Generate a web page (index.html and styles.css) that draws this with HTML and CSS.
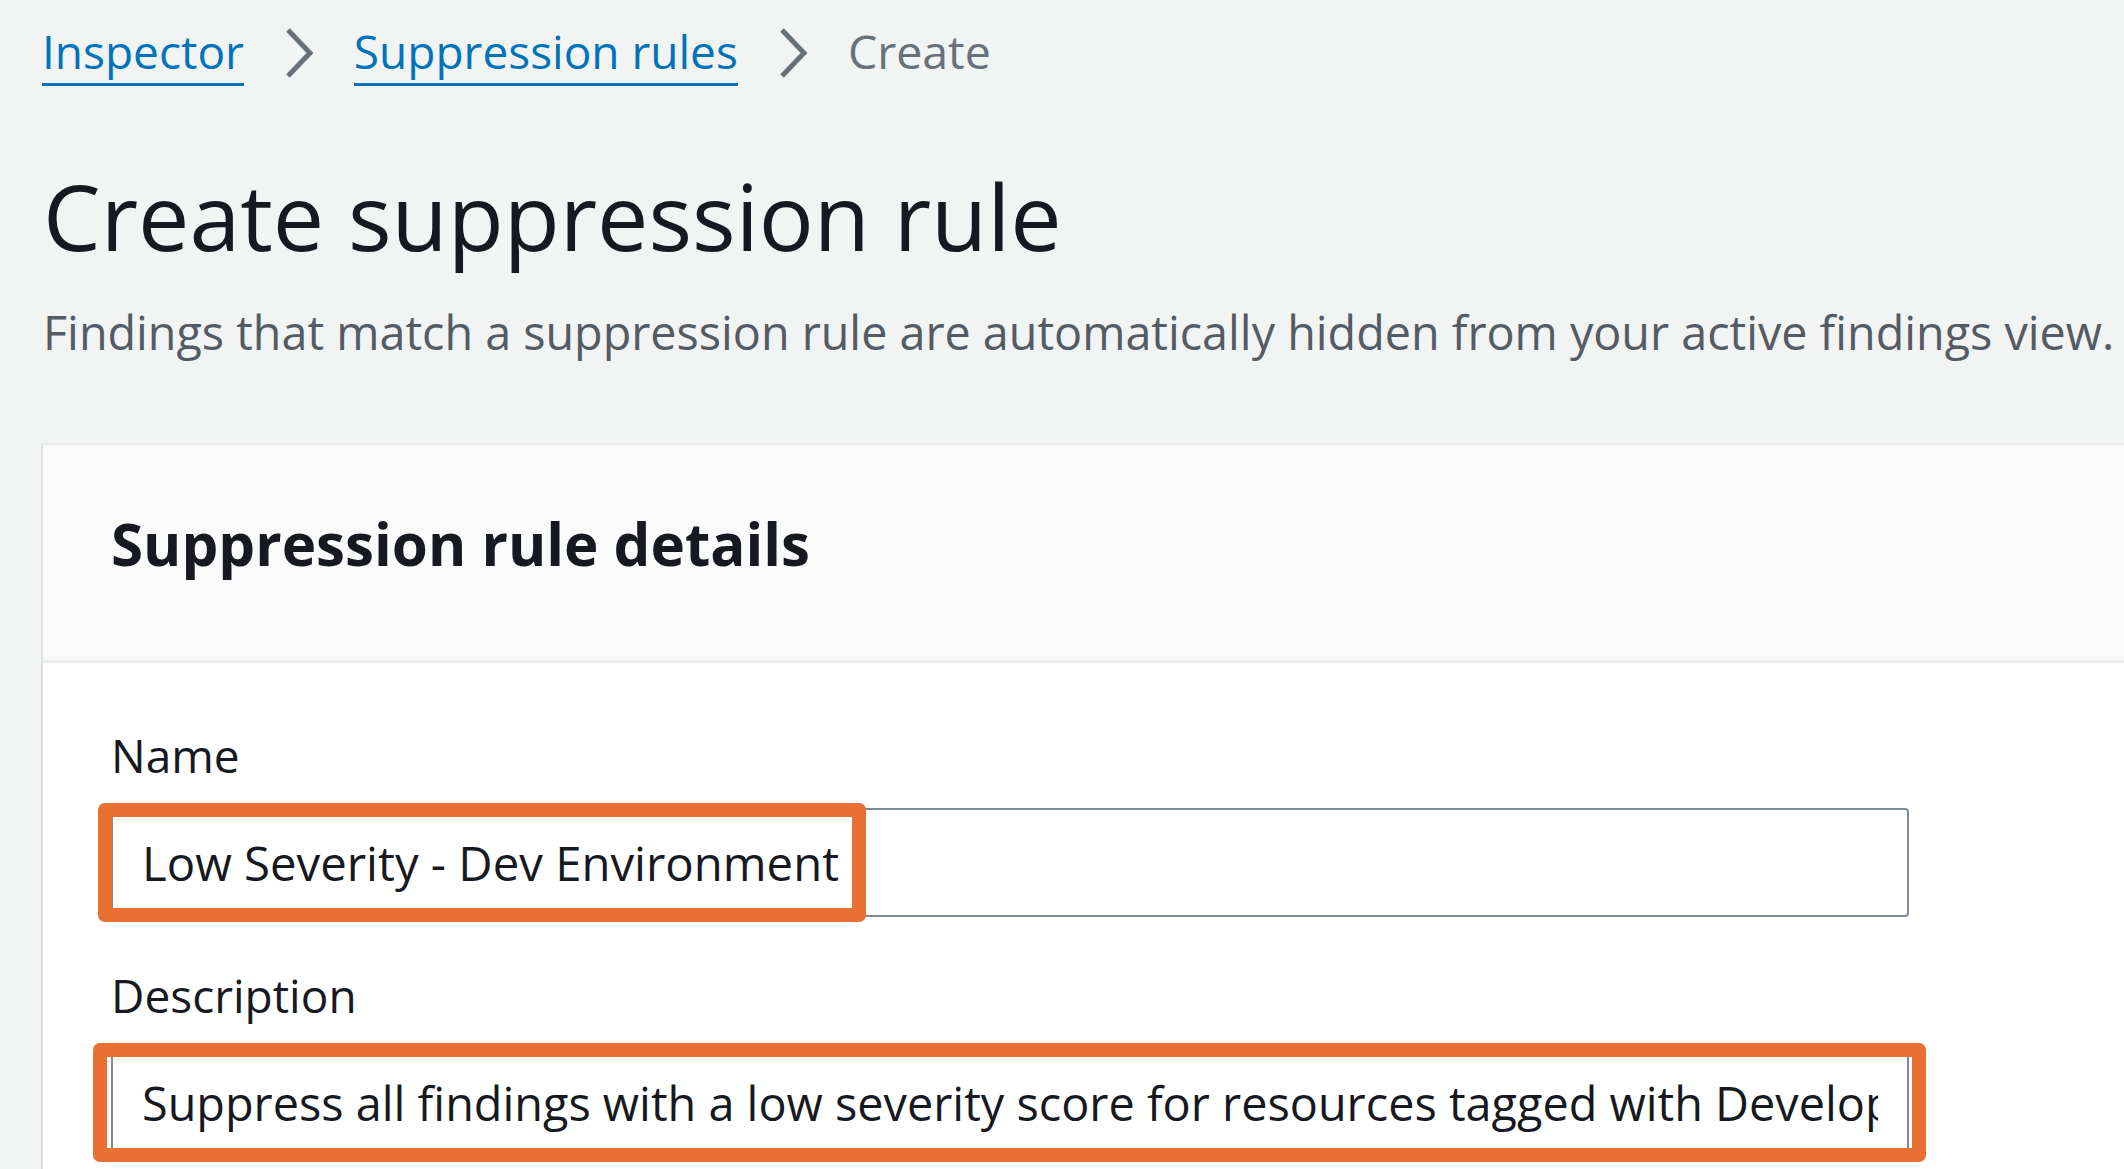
FILE: index.html
```html
<!DOCTYPE html>
<html lang="en">
<head>
<meta charset="utf-8">
<title>Create suppression rule</title>
<link rel="stylesheet" href="styles.css">
</head>
<body>
  <nav class="breadcrumbs" aria-label="Breadcrumbs">
    <a class="crumb-link" href="#">Inspector</a>
    <svg class="crumb-sep" viewBox="0 0 30 52" aria-hidden="true"><polyline points="4,3 26,26 4,49" /></svg>
    <a class="crumb-link" href="#">Suppression rules</a>
    <svg class="crumb-sep" viewBox="0 0 30 52" aria-hidden="true"><polyline points="4,3 26,26 4,49" /></svg>
    <span class="crumb-current">Create</span>
  </nav>

  <header class="page-header">
    <h1 class="page-title">Create suppression rule</h1>
    <p class="page-desc">Findings that match a suppression rule are automatically hidden from your active findings view.</p>
  </header>

  <section class="card">
    <div class="card-header">
      <h2 class="card-title">Suppression rule details</h2>
    </div>
    <div class="card-body">
      <div class="field">
        <label class="field-label" for="rule-name">Name</label>
        <div class="input-wrap">
          <input class="text-input" id="rule-name" type="text" value="Low Severity - Dev Environment">
          <span class="highlight highlight-name" aria-hidden="true"></span>
        </div>
      </div>
      <div class="field">
        <label class="field-label" for="rule-desc">Description</label>
        <div class="input-wrap">
          <input class="text-input text-input-desc" id="rule-desc" type="text" value="Suppress all findings with a low severity score for resources tagged with Development">
          <span class="highlight highlight-desc" aria-hidden="true"></span>
        </div>
      </div>
    </div>
  </section>
</body>
</html>
```

FILE: styles.css
```css
html, body {
  margin: 0;
  padding: 0;
  overflow: hidden;
}

body {
  background: #f2f3f3;
  font-family: "Open Sans", "Liberation Sans", sans-serif;
  color: #16191f;
  width: 2124px;
  height: 1169px;
}

/* Breadcrumbs */
.breadcrumbs {
  display: flex;
  align-items: center;
  padding: 19px 0 0 42px;
  font-size: 46px;
  line-height: 64px;
}

.crumb-link {
  display: inline-block;
  color: #0073bb;
  text-decoration: none;
  border-bottom: 3px solid #0073bb;
}

.crumb-sep {
  width: 30px;
  height: 52px;
  margin: 0 40px;
  fill: none;
  stroke: #687078;
  stroke-width: 5;
}

.crumb-current {
  display: inline-block;
  color: #687078;
  font-size: 46.5px;
  padding-bottom: 3px;
}

/* Page header */
.page-header {
  padding-left: 43px;
}

.page-title {
  margin: 75px 0 0;
  font-size: 91.5px;
  line-height: 110px;
  font-weight: 400;
  color: #16191f;
}

.page-desc {
  margin: 33px 0 0;
  font-size: 46.7px;
  line-height: 56px;
  color: #545b64;
}

/* Card (its right edge lies beyond the frame, so no right border) */
.card {
  margin: 83px 0 0 41px;
  background: #ffffff;
  border-left: 2px solid #dde1e3;
  border-top: 2px solid #e6e9ea;
}

.card-header {
  background: #fafafa;
  padding: 64px 0 81px 68px;
  border-bottom: 3px solid #eaeded;
}

.card-title {
  margin: 0;
  font-size: 58.3px;
  line-height: 70px;
  font-weight: 700;
  color: #16191f;
}

.card-body {
  padding: 64px 0 40px 68px;
}

.field + .field {
  margin-top: 50px;
}

.field-label {
  display: block;
  font-size: 46px;
  line-height: 56px;
  color: #16191f;
  margin-bottom: 25px;
}

.input-wrap {
  position: relative;
  width: 1798px;
}

.text-input {
  display: block;
  box-sizing: border-box;
  width: 1798px;
  height: 109px;
  margin: 0;
  padding: 0 29px 0 29px;
  border: 2px solid #7d8994;
  border-radius: 4px;
  background: #ffffff;
  font-family: inherit;
  font-size: 47.3px;
  color: #16191f;
  outline: none;
}

.text-input-desc {
  font-size: 46.8px;
}

/* Orange annotation boxes drawn over the inputs */
.highlight {
  position: absolute;
  box-sizing: border-box;
  border: 14px solid #e87032;
  border-radius: 7px;
  pointer-events: none;
}

.highlight-name {
  left: -13px;
  top: -5px;
  width: 768px;
  height: 119px;
}

.highlight-desc {
  left: -18px;
  top: -5px;
  width: 1833px;
  height: 119px;
}
```
